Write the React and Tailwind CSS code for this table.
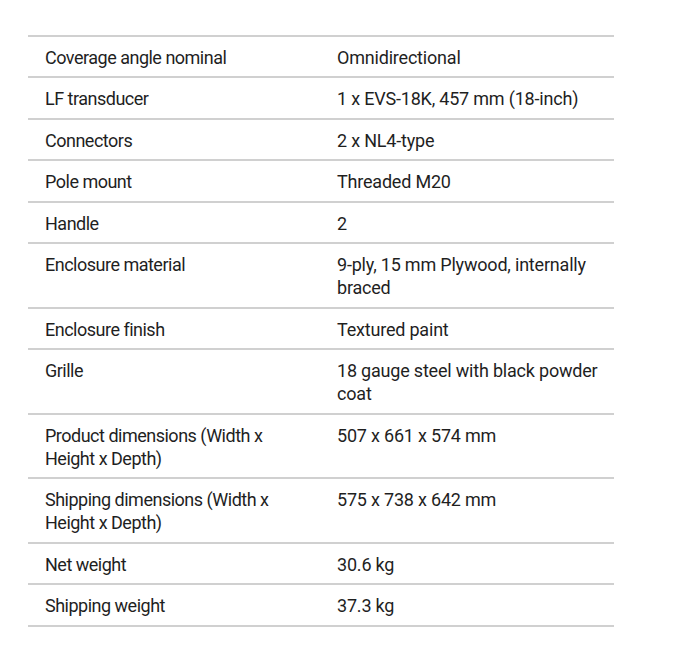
const rows = [
  ["Coverage angle nominal", "Omnidirectional"],
  ["LF transducer", "1 x EVS-18K, 457 mm (18-inch)"],
  ["Connectors", "2 x NL4-type"],
  ["Pole mount", "Threaded M20"],
  ["Handle", "2"],
  ["Enclosure material", "9-ply, 15 mm Plywood, internally braced"],
  ["Enclosure finish", "Textured paint"],
  ["Grille", "18 gauge steel with black powder coat"],
  ["Product dimensions (Width x Height x Depth)", "507 x 661 x 574 mm"],
  ["Shipping dimensions (Width x Height x Depth)", "575 x 738 x 642 mm"],
  ["Net weight", "30.6 kg"],
  ["Shipping weight", "37.3 kg"],
];

export default function App() {
  return (
    <div className="min-h-[653px] w-full bg-white pt-[35px] pl-[28px]">
      <div
        className="w-[586px] border-b-2 border-[#d0d0d0] text-[18px] leading-[23.2px] tracking-[-0.5px] text-[#1f1f1f]"
        style={{ fontFamily: "Roboto, sans-serif" }}
      >
        {rows.map(([k, v]) => (
          <div key={k} className="grid grid-cols-[292px_1fr] border-t-2 border-[#d0d0d0]">
            <div className="pt-[9.1px] pb-[7.1px] pl-[17px] pr-[17px]">{k}</div>
            <div className="pt-[9.1px] pb-[7.1px] pl-[17px] pr-[8px] tracking-[-0.2px]">{v}</div>
          </div>
        ))}
      </div>
    </div>
  );
}
